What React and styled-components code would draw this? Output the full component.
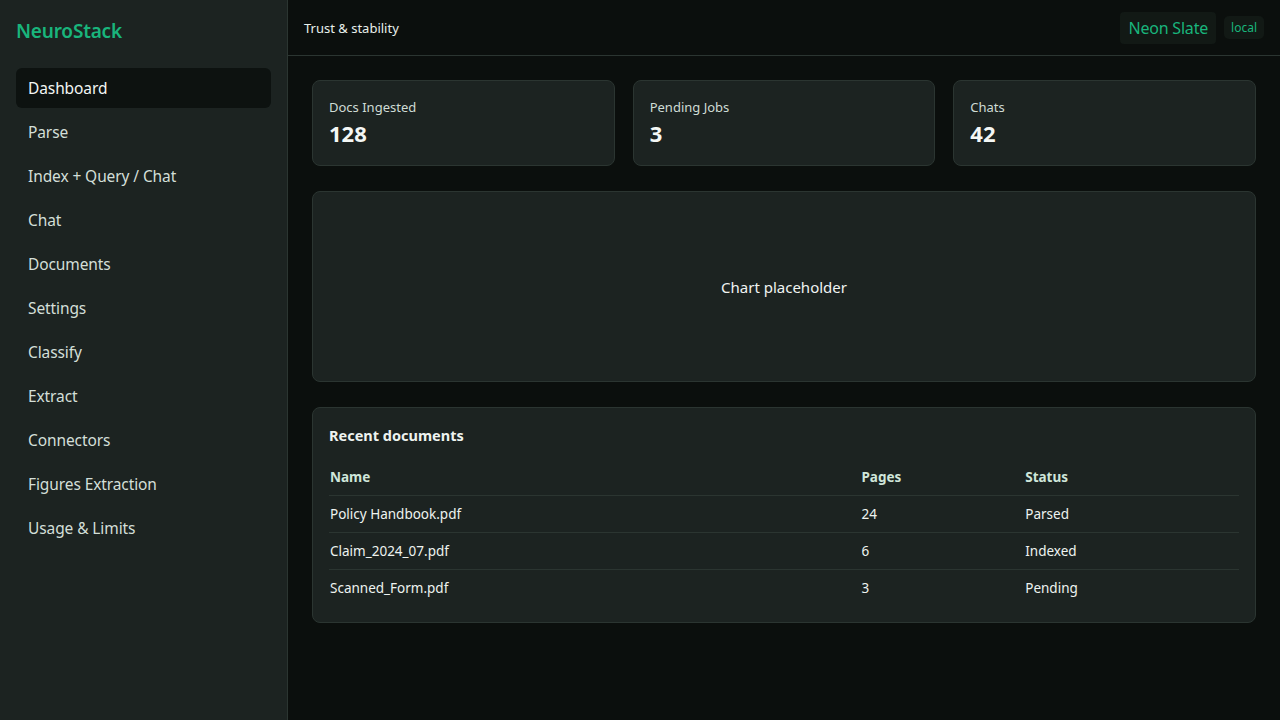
import React from "react";
import styled, { createGlobalStyle } from "styled-components";

const GlobalStyle = createGlobalStyle`
	* { box-sizing: border-box; }
	html, body { margin: 0; padding: 0; background: #0b0f0d; }
	body {
		font-family: "Noto Sans", "Open Sans", sans-serif;
		color: #e6ede9;
	}
`;

const colors = {
	bg: "#0b0f0d",
	panel: "#1c2321",
	border: "#2b3531",
	green: "#19b57c",
	text: "#e8efeb",
	muted: "#cfdcd5",
};

const Layout = styled.div`
	display: flex;
	width: 1280px;
	height: 720px;
	overflow: hidden;
`;

const Sidebar = styled.aside`
	width: 288px;
	flex-shrink: 0;
	background: ${colors.panel};
	border-right: 1px solid ${colors.border};
	padding: 16px 16px;
	display: flex;
	flex-direction: column;
`;

const Logo = styled.div`
	color: ${colors.green};
	font-size: 19px;
	font-weight: 600;
	height: 30px;
	line-height: 30px;
	margin-bottom: 22px;
	letter-spacing: -0.2px;
`;

const Nav = styled.nav`
	display: flex;
	flex-direction: column;
	gap: 4px;
`;

const NavItem = styled.a`
	display: flex;
	align-items: center;
	height: 40px;
	padding: 0 12px;
	border-radius: 6px;
	font-size: 15.5px;
	letter-spacing: -0.1px;
	color: ${(p) => (p.$active ? "#f2f6f4" : "#d3dfd8")};
	background: ${(p) => (p.$active ? "#0d1210" : "transparent")};
	cursor: pointer;
`;

const Main = styled.div`
	flex: 1;
	display: flex;
	flex-direction: column;
	background: ${colors.bg};
`;

const Header = styled.header`
	height: 56px;
	border-bottom: 1px solid ${colors.border};
	display: flex;
	align-items: center;
	justify-content: space-between;
	padding: 0 16px;
`;

const HeaderTitle = styled.div`
	font-size: 13px;
	color: ${colors.text};
`;

const HeaderRight = styled.div`
	display: flex;
	align-items: center;
	gap: 8px;
`;

const Pill = styled.span`
	background: #121915;
	color: ${colors.green};
	border-radius: ${(p) => (p.$small ? "5px" : "4px")};
	font-size: ${(p) => (p.$small ? "12px" : "16px")};
	padding: ${(p) => (p.$small ? "4px 7px" : "5px 8px")};
	line-height: ${(p) => (p.$small ? "15px" : "22px")};
	letter-spacing: ${(p) => (p.$small ? "0" : "-0.2px")};
`;

const Content = styled.main`
	padding: 24px;
	display: flex;
	flex-direction: column;
	gap: 25px;
`;

const StatsRow = styled.div`
	display: grid;
	grid-template-columns: repeat(3, 1fr);
	gap: 18px;
`;

const Card = styled.section`
	background: ${colors.panel};
	border: 1px solid ${colors.border};
	border-radius: 8px;
	padding: 16px;
`;

const StatLabel = styled.div`
	font-size: 13px;
	color: ${colors.muted};
	line-height: 18px;
	margin-top: 1px;
`;

const StatValue = styled.div`
	font-size: 22px;
	font-weight: 700;
	color: #f4f7f5;
	line-height: 30px;
	margin-top: 2px;
	margin-bottom: 1px;
`;

const ChartBox = styled(Card)`
	height: 191px;
	display: flex;
	align-items: center;
	justify-content: center;
	font-size: 15px;
	font-weight: 400;
	color: #f0f4f2;
`;

const CardTitle = styled.h2`
	margin: 0 0 12px;
	font-size: 14.5px;
	font-weight: 700;
	color: #eef3f0;
	line-height: 22px;
`;

const Table = styled.table`
	width: 100%;
	border-collapse: collapse;
	font-size: 13.5px;
`;

const Th = styled.th`
	text-align: left;
	font-weight: 700;
	color: #cfe6da;
	height: 37px;
	padding: 1px 1px 0;
	border-bottom: 1px solid ${colors.border};
	width: ${(p) => p.$w || "auto"};
`;

const Td = styled.td`
	height: 37px;
	padding: 0 1px;
	color: #eef3f0;
	border-bottom: ${(p) => (p.$last ? "none" : `1px solid ${colors.border}`)};
`;

const navItems = [
	"Dashboard",
	"Parse",
	"Index + Query / Chat",
	"Chat",
	"Documents",
	"Settings",
	"Classify",
	"Extract",
	"Connectors",
	"Figures Extraction",
	"Usage & Limits",
];

const stats = [
	{ label: "Docs Ingested", value: "128" },
	{ label: "Pending Jobs", value: "3" },
	{ label: "Chats", value: "42" },
];

const docs = [
	{ name: "Policy Handbook.pdf", pages: 24, status: "Parsed" },
	{ name: "Claim_2024_07.pdf", pages: 6, status: "Indexed" },
	{ name: "Scanned_Form.pdf", pages: 3, status: "Pending" },
];

const App = () => {
	return (
		<>
			<GlobalStyle />
			<Layout>
				<Sidebar>
					<Logo>NeuroStack</Logo>
					<Nav>
						{navItems.map((item, i) => (
							<NavItem key={item} $active={i === 0}>
								{item}
							</NavItem>
						))}
					</Nav>
				</Sidebar>
				<Main>
					<Header>
						<HeaderTitle>Trust &amp; stability</HeaderTitle>
						<HeaderRight>
							<Pill>Neon Slate</Pill>
							<Pill $small>local</Pill>
						</HeaderRight>
					</Header>
					<Content>
						<StatsRow>
							{stats.map((s) => (
								<Card key={s.label}>
									<StatLabel>{s.label}</StatLabel>
									<StatValue>{s.value}</StatValue>
								</Card>
							))}
						</StatsRow>
						<ChartBox>Chart placeholder</ChartBox>
						<Card>
							<CardTitle>Recent documents</CardTitle>
							<Table>
								<thead>
									<tr>
										<Th $w="58.4%">Name</Th>
										<Th $w="18%">Pages</Th>
										<Th>Status</Th>
									</tr>
								</thead>
								<tbody>
									{docs.map((d, i) => (
										<tr key={d.name}>
											<Td $last={i === docs.length - 1}>{d.name}</Td>
											<Td $last={i === docs.length - 1}>{d.pages}</Td>
											<Td $last={i === docs.length - 1}>{d.status}</Td>
										</tr>
									))}
								</tbody>
							</Table>
						</Card>
					</Content>
				</Main>
			</Layout>
		</>
	);
};

export default App;
